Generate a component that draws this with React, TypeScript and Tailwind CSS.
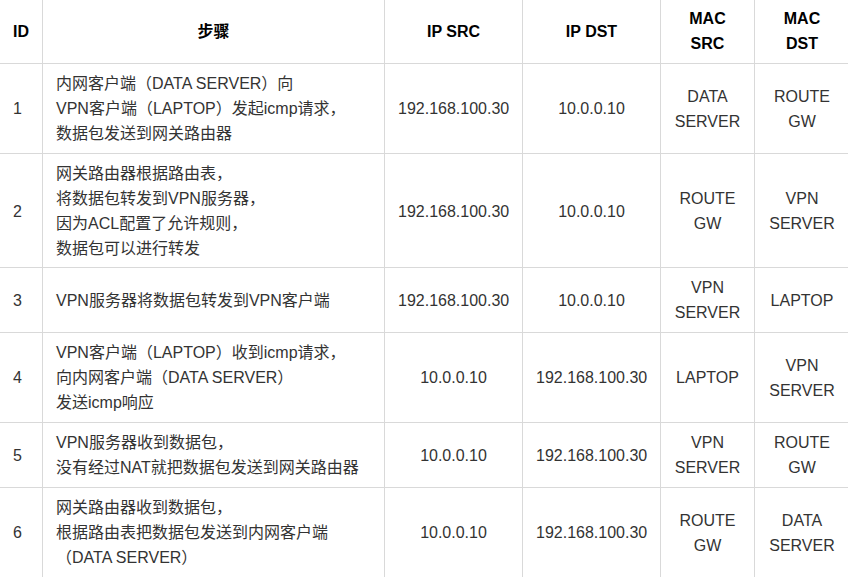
const rows = [
  {
    id: 1,
    step: ["内网客户端（DATA SERVER）向", "VPN客户端（LAPTOP）发起icmp请求，", "数据包发送到网关路由器"],
    src: "192.168.100.30",
    dst: "10.0.0.10",
    macSrc: ["DATA", "SERVER"],
    macDst: ["ROUTE", "GW"],
  },
  {
    id: 2,
    step: ["网关路由器根据路由表，", "将数据包转发到VPN服务器，", "因为ACL配置了允许规则，", "数据包可以进行转发"],
    src: "192.168.100.30",
    dst: "10.0.0.10",
    macSrc: ["ROUTE", "GW"],
    macDst: ["VPN", "SERVER"],
  },
  {
    id: 3,
    step: ["VPN服务器将数据包转发到VPN客户端"],
    src: "192.168.100.30",
    dst: "10.0.0.10",
    macSrc: ["VPN", "SERVER"],
    macDst: ["LAPTOP"],
  },
  {
    id: 4,
    step: ["VPN客户端（LAPTOP）收到icmp请求，", "向内网客户端（DATA SERVER）", "发送icmp响应"],
    src: "10.0.0.10",
    dst: "192.168.100.30",
    macSrc: ["LAPTOP"],
    macDst: ["VPN", "SERVER"],
  },
  {
    id: 5,
    step: ["VPN服务器收到数据包，", "没有经过NAT就把数据包发送到网关路由器"],
    src: "10.0.0.10",
    dst: "192.168.100.30",
    macSrc: ["VPN", "SERVER"],
    macDst: ["ROUTE", "GW"],
  },
  {
    id: 6,
    step: ["网关路由器收到数据包，", "根据路由表把数据包发送到内网客户端", "（DATA SERVER）"],
    src: "10.0.0.10",
    dst: "192.168.100.30",
    macSrc: ["ROUTE", "GW"],
    macDst: ["DATA", "SERVER"],
  },
];

// each line gets a fixed box so mixed latin/CJK fonts don't grow the row
function Lines({ lines }: { lines: string[] }) {
  return (
    <>
      {lines.map((l, i) => (
        <div key={i} className="h-[25px] whitespace-nowrap">
          {l}
        </div>
      ))}
    </>
  );
}

const th = "border border-[#d9d9d9] px-[13px] pt-[6px] pb-[7px] text-center align-middle font-bold text-black";
const td = "border border-[#d9d9d9] px-[13px] align-middle";

export default function App() {
  return (
    <div className="w-[848px] h-[577px] overflow-hidden bg-white">
      <table
        className="-ml-px -mt-px w-[850px] table-fixed border-collapse text-[16px] leading-[25px] text-[#333]"
        style={{ fontFamily: '"Liberation Sans", Arial, "Noto Sans CJK SC", sans-serif' }}
      >
        <colgroup>
          <col className="w-[43px]" />
          <col className="w-[342px]" />
          <col className="w-[138px]" />
          <col className="w-[138px]" />
          <col className="w-[94px]" />
          <col className="w-[95px]" />
        </colgroup>
        <thead>
          <tr>
            <th className={th}>
              <Lines lines={["ID"]} />
            </th>
            <th className={th}>
              <Lines lines={["步骤"]} />
            </th>
            <th className={th}>
              <Lines lines={["IP SRC"]} />
            </th>
            <th className={th}>
              <Lines lines={["IP DST"]} />
            </th>
            <th className={th}>
              <Lines lines={["MAC", "SRC"]} />
            </th>
            <th className={th}>
              <Lines lines={["MAC", "DST"]} />
            </th>
          </tr>
        </thead>
        <tbody>
          {rows.map((r) => {
            const cell = td + (r.step.length === 4 ? " pt-[7px] pb-[6px]" : " py-[7px]");
            return (
              <tr key={r.id}>
                <td className={cell}>
                  <Lines lines={[String(r.id)]} />
                </td>
                <td className={cell + " text-left"}>
                  <Lines lines={r.step} />
                </td>
                <td className={cell + " text-center"}>
                  <Lines lines={[r.src]} />
                </td>
                <td className={cell + " text-center"}>
                  <Lines lines={[r.dst]} />
                </td>
                <td className={cell + " text-center"}>
                  <Lines lines={r.macSrc} />
                </td>
                <td className={cell + " text-center"}>
                  <Lines lines={r.macDst} />
                </td>
              </tr>
            );
          })}
        </tbody>
      </table>
    </div>
  );
}
